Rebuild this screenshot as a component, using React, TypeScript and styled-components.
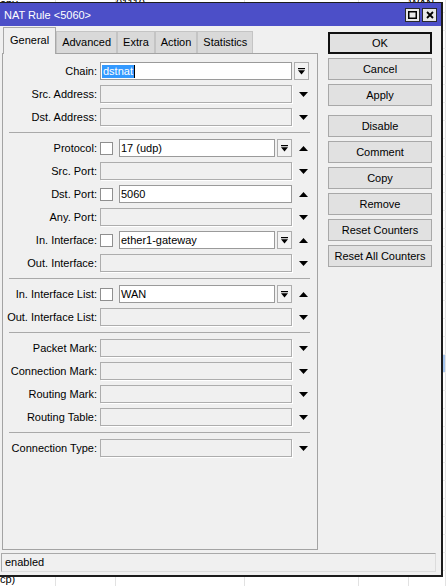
import React from 'react'
import styled, { createGlobalStyle } from 'styled-components'

const GlobalStyle = createGlobalStyle`
  html, body {
    margin: 0;
    padding: 0;
  }
  body {
    width: 446px;
    height: 586px;
    overflow: hidden;
    background: #fff;
    font-family: "Liberation Sans", Arial, sans-serif;
    font-size: 11px;
    color: #000;
  }
`

const Desktop = styled.div`
  position: relative;
  width: 446px;
  height: 586px;
  overflow: hidden;
  background: #fff;
`

// the rule list behind the dialog
const BgList = styled.div`
  display: flex;
  flex-direction: column;
  margin-top: -5px;
`

const BgRow = styled.div<{ $selected?: boolean }>`
  display: grid;
  grid-template-columns: 56px 60px 129px 114px 50px 1fr;
  height: 18px;
  box-sizing: border-box;
  border-bottom: 1px solid #ececec;
  background: ${({ $selected }) => ($selected ? '#a6c6ef' : '#fff')};
`

const BgCell = styled.div`
  border-right: 1px solid #e2e2e2;
  line-height: 17px;
  white-space: nowrap;
  overflow: hidden;
`

const Window = styled.div`
  position: absolute;
  left: -2px;
  top: 2px;
  width: 445px;
  height: 575px;
  box-sizing: border-box;
  border-style: solid;
  border-color: #1c1c1c;
  border-width: 1px 2px 2px 2px;
  background: #f0f0f0;
  display: flex;
  flex-direction: column;
`

const TitleBar = styled.div`
  height: 23px;
  flex: none;
  display: flex;
  align-items: center;
  padding: 0 4px;
  background: #4c4fc8;
  color: #fff;
  font-size: 11px;
`

const Title = styled.div`
  flex: 1;
`

const TitleButtons = styled.div`
  display: flex;
  gap: 2px;
  margin-top: 1px;
`

const TitleButton = styled.div`
  width: 15px;
  height: 14px;
  box-sizing: border-box;
  border: 1px solid #2a2a2a;
  background: #e8e8e8;
  display: flex;
  align-items: center;
  justify-content: center;
`

const Body = styled.div`
  flex: 1;
  display: flex;
  flex-direction: column;
  padding: 1px 0 3px;
  min-height: 0;
`

const Main = styled.div`
  flex: 1;
  display: flex;
  min-height: 0;
`

const LeftCol = styled.div`
  width: 316px;
  margin-left: 2px;
  display: flex;
  flex-direction: column;
`

const TabBar = styled.div`
  height: 26px;
  flex: none;
  display: flex;
  align-items: flex-end;
  padding-left: 1px;
`

const Tab = styled.div<{ $active?: boolean }>`
  box-sizing: border-box;
  height: ${({ $active }) => ($active ? '27px' : '22px')};
  margin-bottom: ${({ $active }) => ($active ? '-1px' : '0')};
  padding: ${({ $active }) => ($active ? '5px 6px 0' : '3px 5px 0')};
  border: 1px solid ${({ $active }) => ($active ? '#a8a8a8' : '#c4c4c4')};
  border-bottom: none;
  background: ${({ $active }) => ($active ? '#f0f0f0' : '#d9d9d9')};
  line-height: 14px;
  white-space: nowrap;
  position: relative;
  z-index: ${({ $active }) => ($active ? 1 : 0)};
`

const Panel = styled.div`
  flex: 1;
  box-sizing: border-box;
  border: 1px solid #a3a3a3;
  background: #f0f0f0;
  padding-top: 8px;
  display: flex;
  flex-direction: column;
`

const Group = styled.div`
  display: flex;
  flex-direction: column;
  gap: 5px;
`

const Separator = styled.div`
  height: 1px;
  background: #a9a9a9;
  margin: 6px 7px 6px 6px;
`

const Row = styled.div`
  height: 18px;
  display: flex;
  align-items: center;
`

const Label = styled.div`
  width: 94px;
  margin-right: 3px;
  text-align: right;
  white-space: nowrap;
`

const Control = styled.div`
  width: 192px;
  height: 100%;
  display: flex;
  align-items: center;
`

const Check = styled.div`
  width: 13px;
  height: 13px;
  box-sizing: border-box;
  border: 1px solid #8f8f8f;
  background: #fff;
  margin-right: 6px;
  flex: none;
`

const Field = styled.div<{ $disabled?: boolean }>`
  flex: 1;
  height: 18px;
  box-sizing: border-box;
  border: 1px solid ${({ $disabled }) => ($disabled ? '#adadad' : '#9a9a9a')};
  background: ${({ $disabled }) => ($disabled ? '#f0f0f0' : '#fff')};
  box-shadow: ${({ $disabled }) => ($disabled ? '1px 1px 0 #fff' : 'none')};
  padding-left: 1px;
  line-height: 16px;
  white-space: nowrap;
  overflow: hidden;
  display: flex;
  align-items: center;
`

const Selected = styled.span`
  background: #3399ff;
  color: #fff;
  line-height: 13px;
  padding: 0 1px;
`

const Caret = styled.span`
  width: 1px;
  height: 13px;
  background: #000;
`

const MenuButton = styled.div<{ $inline?: boolean }>`
  width: 15px;
  height: 18px;
  flex: none;
  box-sizing: border-box;
  border: 1px solid #adadad;
  background: #f3f3f3;
  margin-left: ${({ $inline }) => ($inline ? '2px' : '0')};
  display: flex;
  align-items: center;
  justify-content: center;
`

const Trailing = styled.div`
  width: 15px;
  height: 100%;
  margin-left: 2px;
  display: flex;
  align-items: center;
  justify-content: flex-end;
`

const Arrow = styled.svg`
  display: block;
  margin-right: 1px;
`

const ButtonCol = styled.div`
  width: 104px;
  margin-left: 10px;
  padding-top: 5px;
  display: flex;
  flex-direction: column;
  gap: 4px;
`

const Button = styled.div<{ $default?: boolean; $spaced?: boolean }>`
  height: 22px;
  box-sizing: border-box;
  border: ${({ $default }) => ($default ? '2px solid #111' : '1px solid #a8a8a8')};
  background: #e1e1e1;
  margin-top: ${({ $spaced }) => ($spaced ? '5px' : '0')};
  display: flex;
  align-items: center;
  justify-content: center;
  white-space: nowrap;
`

const StatusBar = styled.div`
  height: 19px;
  flex: none;
  margin: 3px 5px 0 1px;
  box-sizing: border-box;
  border: 1px solid #a9a9a9;
  border-right-color: #dcdcdc;
  border-bottom-color: #dcdcdc;
  padding-left: 3px;
  line-height: 17px;
`

type Trail = 'down' | 'up' | 'menu'

type FieldRow = {
  label: string
  value?: string
  selected?: boolean
  check?: boolean
  menu?: boolean
  trailing: Trail
}

const groups: FieldRow[][] = [
  [
    { label: 'Chain:', value: 'dstnat', selected: true, trailing: 'menu' },
    { label: 'Src. Address:', trailing: 'down' },
    { label: 'Dst. Address:', trailing: 'down' },
  ],
  [
    { label: 'Protocol:', check: true, value: '17 (udp)', menu: true, trailing: 'up' },
    { label: 'Src. Port:', trailing: 'down' },
    { label: 'Dst. Port:', check: true, value: '5060', trailing: 'up' },
    { label: 'Any. Port:', trailing: 'down' },
    { label: 'In. Interface:', check: true, value: 'ether1-gateway', menu: true, trailing: 'up' },
    { label: 'Out. Interface:', trailing: 'down' },
  ],
  [
    { label: 'In. Interface List:', check: true, value: 'WAN', menu: true, trailing: 'up' },
    { label: 'Out. Interface List:', trailing: 'down' },
  ],
  [
    { label: 'Packet Mark:', trailing: 'down' },
    { label: 'Connection Mark:', trailing: 'down' },
    { label: 'Routing Mark:', trailing: 'down' },
    { label: 'Routing Table:', trailing: 'down' },
  ],
  [{ label: 'Connection Type:', trailing: 'down' }],
]

const tabs = ['General', 'Advanced', 'Extra', 'Action', 'Statistics']

const buttons = [
  'OK',
  'Cancel',
  'Apply',
  'Disable',
  'Comment',
  'Copy',
  'Remove',
  'Reset Counters',
  'Reset All Counters',
]

const MenuIcon = () => (
  <svg width="7" height="7" viewBox="0 0 7 7">
    <rect x="0" y="0" width="7" height="1.2" fill="#000" />
    <polygon points="0,2.2 7,2.2 3.5,6.4" fill="#000" />
  </svg>
)

const DownArrow = () => (
  <Arrow width="9" height="5" viewBox="0 0 9 5">
    <polygon points="0,0 9,0 4.5,5" fill="#000" />
  </Arrow>
)

const UpArrow = () => (
  <Arrow width="9" height="5" viewBox="0 0 9 5">
    <polygon points="0,5 9,5 4.5,0" fill="#000" />
  </Arrow>
)

const FormRow: React.FC<{ row: FieldRow }> = ({ row }) => {
  const enabled = row.value !== undefined
  return (
    <Row>
      <Label>{row.label}</Label>
      <Control>
        {row.check && <Check />}
        <Field $disabled={!enabled}>
          {row.selected ? (
            <>
              <Selected>{row.value}</Selected>
              <Caret />
            </>
          ) : (
            row.value && <span>{row.value}</span>
          )}
        </Field>
        {row.menu && (
          <MenuButton $inline>
            <MenuIcon />
          </MenuButton>
        )}
      </Control>
      <Trailing>
        {row.trailing === 'menu' && (
          <MenuButton>
            <MenuIcon />
          </MenuButton>
        )}
        {row.trailing === 'down' && <DownArrow />}
        {row.trailing === 'up' && <UpArrow />}
      </Trailing>
    </Row>
  )
}

const bgRows = Array.from({ length: 34 }, (_, i) => i)

const App: React.FC = () => {
  return (
    <Desktop>
      <GlobalStyle />
      <BgList>
        {bgRows.map((i) => (
          <BgRow key={i} $selected={i === 20}>
            <BgCell>{i === 0 ? 'opy' : i === 32 ? 'cp)' : ''}</BgCell>
            <BgCell />
            <BgCell>{i === 0 ? ' 01110' : ''}</BgCell>
            <BgCell />
            <BgCell />
            <BgCell>{i === 0 ? 'WAN' : ''}</BgCell>
          </BgRow>
        ))}
      </BgList>

      <Window>
        <TitleBar>
          <Title>NAT Rule &lt;5060&gt;</Title>
          <TitleButtons>
            <TitleButton>
              <svg width="9" height="8" viewBox="0 0 9 8">
                <rect x="0.75" y="0.75" width="7.5" height="6.5" fill="none" stroke="#000" strokeWidth="1.5" />
              </svg>
            </TitleButton>
            <TitleButton>
              <svg width="8" height="8" viewBox="0 0 8 8">
                <path d="M1 1 L7 7 M7 1 L1 7" stroke="#000" strokeWidth="1.8" />
              </svg>
            </TitleButton>
          </TitleButtons>
        </TitleBar>

        <Body>
          <Main>
            <LeftCol>
              <TabBar>
                {tabs.map((t, i) => (
                  <Tab key={t} $active={i === 0}>
                    {t}
                  </Tab>
                ))}
              </TabBar>
              <Panel>
                {groups.map((g, gi) => (
                  <React.Fragment key={gi}>
                    {gi > 0 && <Separator />}
                    <Group>
                      {g.map((r) => (
                        <FormRow key={r.label} row={r} />
                      ))}
                    </Group>
                  </React.Fragment>
                ))}
              </Panel>
            </LeftCol>

            <ButtonCol>
              {buttons.map((b, i) => (
                <Button key={b} $default={i === 0} $spaced={b === 'Disable'}>
                  {b}
                </Button>
              ))}
            </ButtonCol>
          </Main>

          <StatusBar>enabled</StatusBar>
        </Body>
      </Window>
    </Desktop>
  )
}

export default App
